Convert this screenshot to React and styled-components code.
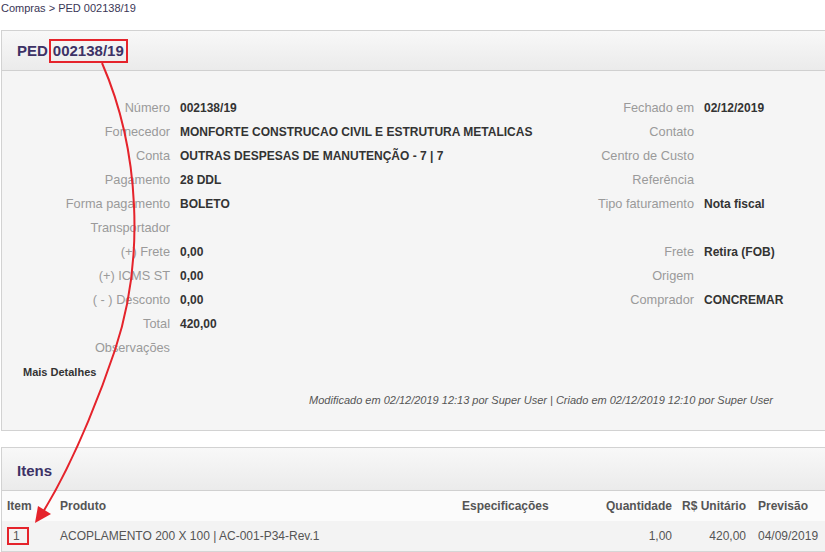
import React from "react";
import styled, { createGlobalStyle } from "styled-components";

const GlobalStyle = createGlobalStyle`
  html, body {
    margin: 0;
    padding: 0;
    background: #fff;
    font-family: "Liberation Sans", Arial, sans-serif;
    color: #333;
    overflow: hidden;
  }
`;

const Page = styled.div`
  position: relative;
  width: 825px;
  height: 552px;
  overflow: hidden;
`;

const Breadcrumb = styled.div`
  height: 30px;
  box-sizing: border-box;
  padding: 2px 0 0 1px;
  font-size: 11px;
  line-height: 13px;
  color: #3a3656;
`;

const Panel = styled.section`
  margin-left: 1px;
  margin-right: -4px;
  border: 1px solid #d2d2d2;
  margin-bottom: ${(p) => p.$gap || 0}px;
`;

const PanelHeader = styled.div`
  height: ${(p) => p.$h}px;
  box-sizing: border-box;
  display: flex;
  align-items: center;
  padding: ${(p) => p.$shift || 0}px 0 0 15px;
  background: linear-gradient(#f8f8f8, #ebebeb);
  border-bottom: 1px solid #d0d0d0;
`;

const Title = styled.h2`
  margin: 0;
  font-size: 15px;
  font-weight: bold;
  color: #3d3266;
`;

const Mark = styled.span`
  display: inline-block;
  margin-left: 1px;
  padding: 0 2px;
  height: 20px;
  line-height: 20px;
  border: 2px solid #e5232b;
`;

const PanelBody = styled.div`
  background: #f5f5f5;
  padding: 25px 0 20px;
`;

const Columns = styled.div`
  display: flex;
`;

const Column = styled.div`
  width: ${(p) => p.$w}px;
  display: flex;
  flex-direction: column;
`;

const Field = styled.div`
  display: grid;
  grid-template-columns: ${(p) => p.$label}px 1fr;
  column-gap: 10px;
  height: 24px;
  line-height: 24px;
  align-items: baseline;
  font-size: 12px;
  white-space: nowrap;
`;

const Label = styled.span`
  text-align: right;
  font-size: 12.75px;
  color: #9a9a9a;
`;

const Value = styled.span`
  font-weight: bold;
  color: #333;
`;

const MoreLink = styled.div`
  margin-top: 2px;
  padding-left: 21px;
  height: 20px;
  line-height: 20px;
  font-size: 11px;
  font-weight: bold;
  color: #333;
`;

const Audit = styled.div`
  margin-top: 8px;
  height: 20px;
  line-height: 20px;
  padding-right: 55px;
  text-align: right;
  font-size: 11px;
  font-style: italic;
  color: #555;
`;

const Row = styled.div`
  display: grid;
  grid-template-columns: 52px 402px 140px 82px 74px 1fr;
  height: 30px;
  align-items: center;
  font-size: 12px;
  background: ${(p) => (p.$head ? "#fbfbfb" : "#f3f3f3")};
  color: #555;
  font-weight: ${(p) => (p.$head ? "bold" : "normal")};
  border-bottom: ${(p) => (p.$head ? "none" : "1px solid #d6d6d6")};
`;

const Cell = styled.span`
  padding: ${(p) => (p.$right ? "0 6px 0 0" : `0 0 0 ${p.$pad || 6}px`)};
  text-align: ${(p) => (p.$right ? "right" : "left")};
  white-space: nowrap;
`;

const ItemMark = styled.span`
  display: inline-block;
  box-sizing: border-box;
  width: 22px;
  height: 18px;
  line-height: 14px;
  padding-left: 4px;
  border: 2px solid #e5232b;
`;

const Annotation = styled.svg`
  position: absolute;
  left: 0;
  top: 0;
  pointer-events: none;
`;

const leftFields = [
  ["Número", "002138/19"],
  ["Fornecedor", "MONFORTE CONSTRUCAO CIVIL E ESTRUTURA METALICAS"],
  ["Conta", "OUTRAS DESPESAS DE MANUTENÇÃO - 7 | 7"],
  ["Pagamento", "28 DDL"],
  ["Forma pagamento", "BOLETO"],
  ["Transportador", ""],
  ["(+) Frete", "0,00"],
  ["(+) ICMS ST", "0,00"],
  ["( - ) Desconto", "0,00"],
  ["Total", "420,00"],
  ["Observações", ""],
];

const rightFields = [
  ["Fechado em", "02/12/2019"],
  ["Contato", ""],
  ["Centro de Custo", ""],
  ["Referência", ""],
  ["Tipo faturamento", "Nota fiscal"],
  ["", ""],
  ["Frete", "Retira (FOB)"],
  ["Origem", ""],
  ["Comprador", "CONCREMAR"],
];

const App = () => {
  return (
    <Page>
      <GlobalStyle />
      <Breadcrumb>Compras &gt; PED 002138/19</Breadcrumb>

      <Panel $gap={16}>
        <PanelHeader $h={40}>
          <Title>
            PED<Mark>002138/19</Mark>
          </Title>
        </PanelHeader>
        <PanelBody>
          <Columns>
            <Column $w={520}>
              {leftFields.map(([l, v]) => (
                <Field key={l} $label={168}>
                  <Label>{l}</Label>
                  <Value>{v}</Value>
                </Field>
              ))}
            </Column>
            <Column $w={300}>
              {rightFields.map(([l, v], i) => (
                <Field key={i} $label={172}>
                  <Label>{l}</Label>
                  <Value>{v}</Value>
                </Field>
              ))}
            </Column>
          </Columns>
          <MoreLink>Mais Detalhes</MoreLink>
          <Audit>
            Modificado em 02/12/2019 12:13 por Super User | Criado em 02/12/2019
            12:10 por Super User
          </Audit>
        </PanelBody>
      </Panel>

      <Panel>
        <PanelHeader $h={43} $shift={2}>
          <Title>Itens</Title>
        </PanelHeader>
        <Row $head>
          <Cell $pad={5}>Item</Cell>
          <Cell>Produto</Cell>
          <Cell>Especificações</Cell>
          <Cell $right>Quantidade</Cell>
          <Cell $right>R$ Unitário</Cell>
          <Cell>Previsão</Cell>
        </Row>
        <Row>
          <Cell $pad={5}>
            <ItemMark>1</ItemMark>
          </Cell>
          <Cell>ACOPLAMENTO 200 X 100 | AC-001-P34-Rev.1</Cell>
          <Cell></Cell>
          <Cell $right>1,00</Cell>
          <Cell $right>420,00</Cell>
          <Cell>04/09/2019</Cell>
        </Row>
      </Panel>

      <Annotation width="825" height="552" viewBox="0 0 825 552">
        <path
          d="M102,63 C140,150 145,260 115,350 C105,380 78,455 43,512"
          fill="none"
          stroke="#e5232b"
          strokeWidth="2"
        />
        <polygon points="35,523 38,506 51,514" fill="#e5232b" />
      </Annotation>
    </Page>
  );
};

export default App;
